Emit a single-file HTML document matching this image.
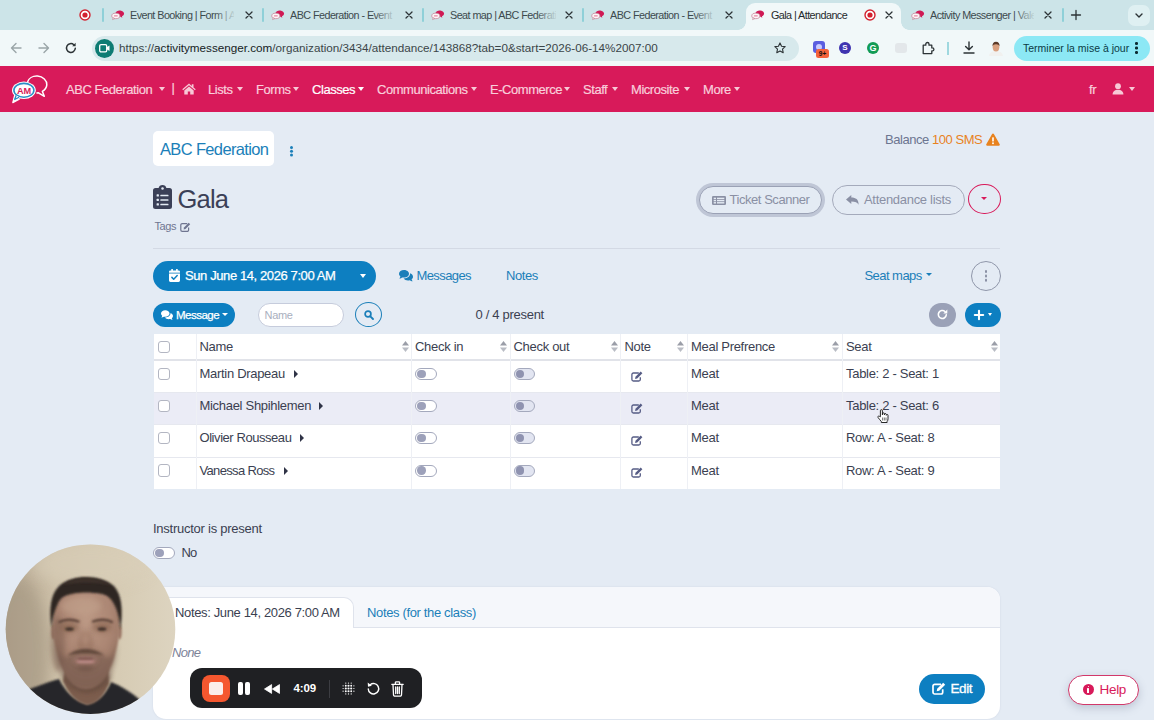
<!DOCTYPE html>
<html lang="en">
<head>
<meta charset="utf-8">
<title>Gala | Attendance</title>
<style>
*{box-sizing:border-box;margin:0;padding:0}
html,body{width:1154px;height:720px;overflow:hidden}
body{position:relative;background:#e4ebf4;font-family:"Liberation Sans",sans-serif;color:#3b3f51;font-size:13px;line-height:1}
.a{position:absolute;white-space:nowrap}
svg{position:absolute;overflow:visible}
/* ---------- browser chrome ---------- */
#tabs{left:0;top:0;width:1154px;height:30px;background:#cce4e8}
#tool{left:0;top:30px;width:1154px;height:36px;background:#f1f8f9}
.tt{top:9.500px;font-size:10.800px;letter-spacing:-.56px;color:#3c4a4e;height:13px;overflow:hidden}
.tsep{top:8px;width:1.5px;height:14px;background:#8fd0d8;border-radius:1px}
.tx{top:9px;font-size:12px;color:#2c3336}
#url{left:92px;top:35.500px;width:706.500px;height:25px;border-radius:12.500px;background:#d7e9ec}
/* ---------- app nav ---------- */
#nav{left:0;top:66px;width:1154px;height:46.300px;background:#d81a5a}
.nv{top:82.500px;font-size:13px;letter-spacing:-.45px;color:#f9cfdb;-webkit-text-stroke:.2px #f9cfdb}
.cv{width:0;height:0;border-left:3.5px solid transparent;border-right:3.5px solid transparent;border-top:4px solid #f7c9d6;top:87px}
/* ---------- page ---------- */
.blue{color:#1a7db8}
.pill{border-radius:20px}

.t{font-size:13px;letter-spacing:-.45px}
.bl{color:#1b7fb9}
.gr{color:#8a90a4}
.btn{border-radius:16px}

.th,.td{font-size:13px;letter-spacing:-.3px;color:#3b3f51}
.vb{width:1px;background:#eef0f5;top:333.500px;height:155.500px}
.hb{left:153.500px;width:846.500px;height:1px;background:#e6e8ef}
.cb{width:12.500px;height:12.500px;border:1px solid #b3b6c2;border-radius:3px;background:#fff;left:157.500px}
.tg{width:21.500px;height:12px;border-radius:6px;border:1px solid #a4a9bd;background:#fff}
.tg i{position:absolute;left:1.200px;top:.800px;width:8.400px;height:8.400px;border-radius:50%;background:#9da1ba}
.tg.d{background:#e2e5f1}
.tg.d i{background:#8f93b0}
</style>
</head>
<body>
<!-- ======= BROWSER CHROME ======= -->
<div class="a" id="tabs"></div>
<div class="a" id="tool"></div>
<svg width="0" height="0"><defs>
<g id="fav" transform="translate(0,1.300) scale(.86)"><path d="M5.200 4.300c.6-2 3-3.300 5.600-3 2.700.3 4.600 2 4.400 4-.1 1.300-1.100 2.300-2.500 2.900l.5 1.600-2.100-1.200c-.5 0-1 0-1.500-.1" fill="#cf1a55"/><ellipse cx="5.600" cy="7.700" rx="4.700" ry="3.200" fill="#fdf6f8" stroke="#c9879b" stroke-width=".9"/><path d="M2.600 9.800l-.8 2.200 2.700-1.200z" fill="#fdf6f8" stroke="#c9879b" stroke-width=".8"/><rect x="3.300" y="6.900" width="4.600" height="1.500" rx=".5" fill="#e58aa5"/></g>
<g id="rec"><circle cx="6" cy="6" r="5" fill="#fff" stroke="#d3212f" stroke-width="1.400"/><circle cx="6" cy="6" r="2.600" fill="#d3212f"/></g>
<g id="xx"><path d="M1 1l6 6M7 1l-6 6" stroke="#2c3336" stroke-width="1.300" stroke-linecap="round" fill="none"/></g>
</defs></svg>
<!-- active tab -->
<div class="a" style="left:746px;top:3px;width:155px;height:28px;background:#f1f8f9;border-radius:9px 9px 0 0"></div>
<div class="a" style="left:738px;top:22px;width:8px;height:8px;background:radial-gradient(circle at 0 0,#cce4e8 7.500px,#f1f8f9 8px)"></div>
<div class="a" style="left:901px;top:22px;width:8px;height:8px;background:radial-gradient(circle at 100% 0,#cce4e8 7.500px,#f1f8f9 8px)"></div>
<svg style="left:79px;top:9px" width="12" height="12"><use href="#rec"/></svg>
<div class="a tsep" style="left:102px"></div>
<svg style="left:111px;top:8px" width="16" height="13"><use href="#fav"/></svg>
<div class="a tt" style="left:130px;width:104px">Event Booking | Form | Ac</div>
<svg style="left:245px;top:11px" width="8" height="8"><use href="#xx"/></svg>
<div class="a tsep" style="left:262px"></div>
<svg style="left:271px;top:8px" width="16" height="13"><use href="#fav"/></svg>
<div class="a tt" style="left:290px;width:104px">ABC Federation - Event B</div>
<svg style="left:405px;top:11px" width="8" height="8"><use href="#xx"/></svg>
<div class="a tsep" style="left:422px"></div>
<svg style="left:431px;top:8px" width="16" height="13"><use href="#fav"/></svg>
<div class="a tt" style="left:450px;width:106px">Seat map | ABC Federation</div>
<svg style="left:565px;top:11px" width="8" height="8"><use href="#xx"/></svg>
<div class="a tsep" style="left:582px"></div>
<svg style="left:591px;top:8px" width="16" height="13"><use href="#fav"/></svg>
<div class="a tt" style="left:610px;width:104px">ABC Federation - Event B</div>
<svg style="left:725px;top:11px" width="8" height="8"><use href="#xx"/></svg>
<svg style="left:751px;top:8px" width="16" height="13"><use href="#fav"/></svg>
<div class="a tt" style="left:771px;width:90px;color:#1f2a2d">Gala | Attendance</div>
<svg style="left:864px;top:9px" width="12" height="12"><use href="#rec"/></svg>
<svg style="left:885px;top:11px" width="8" height="8"><use href="#xx"/></svg>
<svg style="left:911px;top:8px" width="16" height="13"><use href="#fav"/></svg>
<div class="a tt" style="left:930px;width:104px">Activity Messenger | Vale</div>
<svg style="left:1044px;top:11px" width="8" height="8"><use href="#xx"/></svg>
<div class="a tsep" style="left:1062px"></div>
<svg style="left:1071px;top:10px" width="10" height="10"><path d="M5 .5v9M.5 5h9" stroke="#2c3336" stroke-width="1.300" stroke-linecap="round"/></svg>
<div class="a" style="left:1128px;top:5px;width:22px;height:21px;border-radius:7px;background:#dff0f2"></div>
<svg style="left:1135px;top:13px" width="8" height="6"><path d="M1 1l3 3 3-3" stroke="#2c3336" stroke-width="1.400" fill="none" stroke-linecap="round" stroke-linejoin="round"/></svg>
<!-- fades on tab titles -->
<div class="a" style="left:214px;top:8px;width:22px;height:15px;background:linear-gradient(90deg,rgba(204,228,232,0),#cce4e8)"></div>
<div class="a" style="left:374px;top:8px;width:22px;height:15px;background:linear-gradient(90deg,rgba(204,228,232,0),#cce4e8)"></div>
<div class="a" style="left:536px;top:8px;width:22px;height:15px;background:linear-gradient(90deg,rgba(204,228,232,0),#cce4e8)"></div>
<div class="a" style="left:694px;top:8px;width:22px;height:15px;background:linear-gradient(90deg,rgba(204,228,232,0),#cce4e8)"></div>
<div class="a" style="left:1014px;top:8px;width:22px;height:15px;background:linear-gradient(90deg,rgba(204,228,232,0),#cce4e8)"></div>
<!-- toolbar -->
<svg style="left:10px;top:42px" width="12" height="12"><path d="M11 6H1.500M6 1.500L1.500 6 6 10.500" stroke="#9aa5a8" stroke-width="1.400" fill="none" stroke-linecap="round" stroke-linejoin="round"/></svg>
<svg style="left:38px;top:42px" width="12" height="12"><path d="M1 6h9.500M6 1.500L10.500 6 6 10.500" stroke="#9aa5a8" stroke-width="1.400" fill="none" stroke-linecap="round" stroke-linejoin="round"/></svg>
<svg style="left:65px;top:42px" width="12" height="12"><path d="M10.300 6.300a4.400 4.400 0 1 1-1.500-3.600" stroke="#2c3336" stroke-width="1.500" fill="none" stroke-linecap="round"/><path d="M10.600.8v3.400H7.200z" fill="#2c3336"/></svg>
<div class="a" id="url"></div>
<div class="a" style="left:95px;top:39px;width:19px;height:19px;border-radius:50%;background:#0e7c73"></div>
<svg style="left:99px;top:44px" width="11" height="9"><rect x=".7" y=".7" width="7" height="7.200" rx="1.300" fill="none" stroke="#fff" stroke-width="1.300"/><path d="M7.700 3.300l2.800-1.800v5.600L7.700 5.300z" fill="#fff"/></svg>
<div class="a" style="left:119px;top:42px;font-size:11.7px;color:#3b4548" id="urltxt">https://<span style="color:#161c1e">activitymessenger.com</span>/organization/3434/attendance/143868?tab=0&amp;start=2026-06-14%2007:00</div>
<svg style="left:774px;top:42px" width="12" height="12"><path d="M6 .9l1.550 3.300 3.600.45-2.650 2.500.7 3.550L6 8.950 2.800 10.700l.7-3.550L.85 4.650l3.600-.45z" fill="none" stroke="#2c3336" stroke-width="1.100" stroke-linejoin="round"/></svg>
<!-- extensions -->
<div class="a" style="left:813px;top:41px;width:12px;height:12px;border-radius:3px;background:#5b5fe0"></div>
<div class="a" style="left:816px;top:44px;width:6px;height:6px;border-radius:50%;background:#c9cbff"></div>
<div class="a" style="left:816px;top:49px;width:13px;height:9px;border-radius:2.500px;background:#f4623a;color:#111;font-size:6.500px;font-weight:700;line-height:9px;text-align:center">9+</div>
<div class="a" style="left:839px;top:42px;width:12px;height:12px;border-radius:50%;background:#3f33b0;color:#fff;font-size:8px;font-weight:700;line-height:12px;text-align:center">S</div>
<div class="a" style="left:867px;top:42px;width:12px;height:12px;border-radius:50%;background:#129b55;color:#fff;font-size:9px;font-weight:700;line-height:12px;text-align:center">G</div>
<div class="a" style="left:895px;top:43px;width:12px;height:10px;border-radius:3px;background:#e3e7ea"></div>
<svg style="left:921px;top:41px" width="14" height="14"><path d="M2.200 4.200h2.600V3.100a1.600 1.600 0 0 1 3.200 0v1.100h2.800v2.700h.6a1.500 1.500 0 0 1 0 3h-.6v2.700H2.200z" fill="none" stroke="#2c3336" stroke-width="1.300" stroke-linejoin="round"/></svg>
<div class="a" style="left:947px;top:42px;width:1.500px;height:13px;background:#9fd8df"></div>
<svg style="left:963px;top:41px" width="12" height="13"><path d="M6 1v7.500M2.600 5.400L6 8.800l3.400-3.400M1 12h10" stroke="#2c3336" stroke-width="1.400" fill="none" stroke-linecap="round" stroke-linejoin="round"/></svg>
<svg style="left:989px;top:41px" width="14" height="15" viewBox="0 0 14 15"><path d="M0 15c.5-3.500 3-5 7-5s6.500 1.500 7 5z" fill="#f1f1ef"/><ellipse cx="7" cy="6.300" rx="3.300" ry="4.200" fill="#d9a07f"/><path d="M3.500 5.500c-.3-3 1.200-4.800 3.500-4.800s3.900 1.800 3.500 4.800c-.5-1.500-1.300-2.300-3.500-2.300S4 4 3.500 5.500z" fill="#5b3a28"/></svg>
<div class="a" style="left:1014px;top:36px;width:136px;height:25px;border-radius:13px;background:#8ce8f5"></div>
<div class="a" style="left:1023px;top:43px;font-size:10.500px;color:#0a3a44" id="upd">Terminer la mise à jour</div>
<div class="a" style="left:1135px;top:42px;width:2.600px;height:2.600px;border-radius:50%;background:#0b2a30;box-shadow:0 4.500px 0 #0b2a30,0 9px 0 #0b2a30"></div>
<!--CHROME-->
<!-- ======= APP NAV ======= -->
<div class="a" id="nav"></div>
<svg style="left:11px;top:74px" width="38" height="32" viewBox="0 0 38 32"><path d="M16.500 8c1.200-3.700 5.200-6.200 10-5.900 5.500.4 9.600 4.300 9.300 8.800-.2 2.700-1.900 5-4.500 6.400l2 5-5.800-3.500c-.7.100-1.400.100-2.100.100" fill="none" stroke="#fff" stroke-width="1.500" stroke-linejoin="round"/><path d="M3.600 21.500L1.800 28.600l6.500-3.400z" fill="#fff" stroke="#fff" stroke-width="1.200" stroke-linejoin="round"/><ellipse cx="12.900" cy="16.300" rx="11.900" ry="8.700" fill="#fff"/><ellipse cx="12.900" cy="16.300" rx="10" ry="6.900" fill="#fff" stroke="#2a8fc6" stroke-width="1.600"/><path d="M5.200 21.300l-1.500 4.200 4.300-2.300" fill="#fff" stroke="#2a8fc6" stroke-width="1.300" stroke-linejoin="round"/><text x="12.900" y="20" text-anchor="middle" font-family="Liberation Sans,sans-serif" font-size="9.200" font-weight="700" fill="#d81a5a" letter-spacing="-.3">AM</text></svg>
<div class="a nv" style="left:66px">ABC Federation</div><div class="a cv" style="left:158.500px"></div>
<div class="a nv" style="left:171.500px;top:81px">|</div>
<svg style="left:182px;top:83px" width="14" height="12" viewBox="0 0 14 12"><path d="M7 .6L.3 6.300l.8.900L7 2.200l5.900 5 .8-.9L11.500 4.400V1.200H9.800v1.700z" fill="#f7c9d6"/><path d="M7 3.400L2.300 7.400v4.100h3.500V8.600h2.400v2.900h3.500V7.400z" fill="#f7c9d6"/></svg>
<div class="a nv" style="left:208px">Lists</div><div class="a cv" style="left:236.500px"></div>
<div class="a nv" style="left:256px">Forms</div><div class="a cv" style="left:292.500px"></div>
<div class="a nv" style="left:312px;color:#fff;-webkit-text-stroke:.2px #fff">Classes</div><div class="a cv" style="left:357.500px;border-top-color:#fff"></div>
<div class="a nv" style="left:377px">Communications</div><div class="a cv" style="left:470.500px"></div>
<div class="a nv" style="left:490px">E-Commerce</div><div class="a cv" style="left:563.500px"></div>
<div class="a nv" style="left:583px">Staff</div><div class="a cv" style="left:611.500px"></div>
<div class="a nv" style="left:631px">Microsite</div><div class="a cv" style="left:683.500px"></div>
<div class="a nv" style="left:703px">More</div><div class="a cv" style="left:733.500px"></div>
<div class="a nv" style="left:1089px">fr</div>
<svg style="left:1112px;top:83px" width="12" height="12" viewBox="0 0 12 12"><circle cx="6" cy="3.200" r="2.900" fill="#f7c9d6"/><path d="M.6 11.600c0-3.200 2.200-4.800 5.400-4.800s5.400 1.600 5.400 4.800z" fill="#f7c9d6"/></svg>
<div class="a cv" style="left:1128.500px"></div>
<!--NAV-->
<!-- ======= PAGE ======= -->
<div class="a" style="left:153px;top:130.500px;width:121px;height:35.500px;background:#fff;border-radius:5px"></div>
<div class="a bl" id="org" style="left:160px;top:141px;font-size:16.500px;letter-spacing:-.65px">ABC Federation</div>
<div class="a" style="left:289.500px;top:145.500px;width:3.200px;height:3.200px;border-radius:50%;background:#1b7fb9;box-shadow:0 3.700px 0 #1b7fb9,0 7.400px 0 #1b7fb9"></div>
<div class="a t" id="bal" style="left:885px;top:133px;color:#6c7590">Balance <span style="color:#e8821e">100 SMS</span></div>
<svg style="left:986px;top:133px" width="14" height="13" viewBox="0 0 14 13"><path d="M7 .5a1 1 0 0 1 .9.500l5.800 10.300a1 1 0 0 1-.9 1.500H1.200a1 1 0 0 1-.9-1.500L6.100 1A1 1 0 0 1 7 .5z" fill="#e8821e"/><rect x="6.200" y="4.200" width="1.600" height="4.300" rx=".6" fill="#fff"/><circle cx="7" cy="10.300" r=".95" fill="#fff"/></svg>
<!-- heading -->
<svg style="left:153px;top:185px" width="19" height="24" viewBox="0 0 19 24"><path d="M2.500 3h3.100a4 4 0 0 1 7.800 0h3.100A2.500 2.500 0 0 1 19 5.500v16a2.500 2.500 0 0 1-2.500 2.500h-14A2.500 2.500 0 0 1 0 21.500v-16A2.500 2.500 0 0 1 2.500 3z" fill="#3b4057"/><circle cx="9.500" cy="3.600" r="1.250" fill="#e4ebf4"/><g fill="#e4ebf4"><rect x="3.600" y="9.300" width="2.300" height="2.300" rx=".5"/><rect x="7.300" y="9.700" width="8.200" height="1.600" rx=".5"/><rect x="3.600" y="13.800" width="2.300" height="2.300" rx=".5"/><rect x="7.300" y="14.200" width="8.200" height="1.600" rx=".5"/><rect x="3.600" y="18.300" width="2.300" height="2.300" rx=".5"/><rect x="7.300" y="18.700" width="8.200" height="1.600" rx=".5"/></g></svg>
<div class="a" id="gala" style="left:177.500px;top:186.500px;font-size:25.500px;letter-spacing:-.8px;color:#3b4057">Gala</div>
<div class="a" id="tags" style="left:154.500px;top:221px;font-size:11px;letter-spacing:-.4px;color:#6f7590">Tags</div>
<svg style="left:180px;top:222px" width="11" height="10" viewBox="0 0 11 10"><path d="M7.200 1.600H2.200A1.400 1.400 0 0 0 .8 3v5a1.400 1.400 0 0 0 1.400 1.400h5A1.400 1.400 0 0 0 8.600 8V5.600" fill="none" stroke="#6f7590" stroke-width="1.200"/><path d="M4 5.500L8.700.8l1.500 1.500L5.500 7 3.600 7.400z" fill="#6f7590"/></svg>
<!-- top-right buttons -->
<div class="a" style="left:695.500px;top:182.500px;width:129px;height:34px;border-radius:17px;background:#bfc6d6"></div>
<div class="a" style="left:698.500px;top:185.500px;width:123px;height:28px;border-radius:14px;background:#e4ebf4;border:1px solid #9aa1b5"></div>
<svg style="left:711.500px;top:195.500px" width="14" height="9" viewBox="0 0 14 9"><rect width="14" height="9" rx="1.300" fill="#8a90a4"/><g fill="#e4ebf4"><rect x="1.700" y="1.700" width="2.300" height="1.400"/><rect x="5" y="1.700" width="7.300" height="1.400"/><rect x="1.700" y="3.900" width="2.300" height="1.400"/><rect x="5" y="3.900" width="7.300" height="1.400"/><rect x="1.700" y="6.100" width="2.300" height="1.400"/><rect x="5" y="6.100" width="7.300" height="1.400"/></g></svg>
<div class="a t gr" id="tsc" style="left:729.500px;top:192.500px">Ticket Scanner</div>
<div class="a" style="left:831.500px;top:184.500px;width:133px;height:30px;border-radius:15px;border:1px solid #a4aabb"></div>
<svg style="left:846px;top:195px" width="13" height="10" viewBox="0 0 13 10"><path d="M5.300 0v2.600c4.500 0 7.300 1.900 7.300 7.100-1.200-2.500-3.200-3.300-7.300-3.300V9L0 4.500z" fill="#8a90a4"/></svg>
<div class="a t gr" id="atl" style="left:864px;top:192.500px;letter-spacing:-.3px">Attendance lists</div>
<div class="a" style="left:968px;top:183.600px;width:32.500px;height:30.400px;border-radius:50%;border:1px solid #d81a5a"></div>
<div class="a" style="left:980.500px;top:196.500px;width:0;height:0;border-left:3.500px solid transparent;border-right:3.500px solid transparent;border-top:3.800px solid #d81a5a"></div>
<div class="a" style="left:153px;top:247.500px;width:847px;height:1px;background:#d3d9e4"></div>
<!-- date row -->
<div class="a" style="left:153px;top:260.500px;width:223px;height:30px;border-radius:15px;background:#0d7fc1"></div>
<svg style="left:169px;top:268.500px" width="11" height="13" viewBox="0 0 11 13"><path d="M2.300 0h1.600v1.400h3.200V0h1.600v1.400h.9A1.400 1.400 0 0 1 11 2.800v8.800A1.400 1.400 0 0 1 9.600 13H1.400A1.400 1.400 0 0 1 0 11.600V2.800a1.400 1.400 0 0 1 1.400-1.400h.9z" fill="#fff"/><path d="M2.900 8.400l1.800 1.800 3.500-3.600" stroke="#0d7fc1" stroke-width="1.500" fill="none" stroke-linecap="round" stroke-linejoin="round"/><rect x="0" y="3.700" width="11" height=".8" fill="#0d7fc1"/></svg>
<div class="a" id="dt" style="left:185px;top:269px;font-size:13px;letter-spacing:-.4px;color:#fff;-webkit-text-stroke:.25px #fff">Sun June 14, 2026 7:00 AM</div>
<div class="a" style="left:359.500px;top:274px;width:0;height:0;border-left:3.500px solid transparent;border-right:3.500px solid transparent;border-top:4px solid #fff"></div>
<svg style="left:399px;top:269.500px" width="14" height="11" viewBox="0 0 14 11"><path d="M5 0c2.800 0 5 1.700 5 3.800S7.800 7.600 5 7.600c-.6 0-1.200-.1-1.700-.2C2.600 7.900 1.600 8.400.3 8.400c.6-.6 1-1.300 1.100-2C.5 5.700 0 4.800 0 3.800 0 1.700 2.200 0 5 0z" fill="#1b7fb9"/><path d="M11 4c1.700.6 3 1.900 3 3.400 0 1-.5 1.900-1.400 2.600.1.700.5 1.400 1.100 2-1.300 0-2.300-.5-3-1-.5.100-1.100.2-1.700.2-1.900 0-3.500-.8-4.400-2 .1 0 .3 0 .4 0 3.400 0 6.100-2.200 6.100-4.900 0-.1 0-.2-.1-.3z" fill="#1b7fb9" transform="translate(0,-.7)"/></svg>
<div class="a t bl" id="msgs" style="left:416.500px;top:269px;font-size:13px;letter-spacing:-.6px">Messages</div>
<div class="a t bl" id="nts" style="left:506px;top:269px;font-size:13px">Notes</div>
<div class="a t bl" id="smp" style="left:864.500px;top:268.500px;font-size:13px;letter-spacing:-.55px">Seat maps</div>
<div class="a" style="left:926px;top:272.500px;width:0;height:0;border-left:3.300px solid transparent;border-right:3.300px solid transparent;border-top:3.800px solid #1b7fb9"></div>
<div class="a" style="left:971px;top:260.500px;width:30px;height:30px;border-radius:50%;border:1px solid #9097aa"></div>
<div class="a" style="left:984.600px;top:269.800px;width:2.800px;height:2.800px;border-radius:50%;background:#8a90a4;box-shadow:0 4.400px 0 #8a90a4,0 8.800px 0 #8a90a4"></div>
<!-- message row -->
<div class="a" style="left:153px;top:303px;width:82px;height:23.500px;border-radius:12px;background:#0d7fc1"></div>
<svg style="left:161px;top:310px" width="12" height="10" viewBox="0 0 14 11"><path d="M5 0c2.800 0 5 1.700 5 3.800S7.800 7.600 5 7.600c-.6 0-1.200-.1-1.700-.2C2.600 7.900 1.600 8.400.3 8.400c.6-.6 1-1.300 1.100-2C.5 5.700 0 4.800 0 3.800 0 1.700 2.200 0 5 0z" fill="#fff"/><path d="M11 3.300c1.700.6 3 1.900 3 3.400 0 1-.5 1.900-1.400 2.600.1.700.5 1.400 1.100 2-1.300 0-2.300-.5-3-1-.5.100-1.100.2-1.700.2-1.900 0-3.500-.8-4.400-2h.4c3.400 0 6.100-2.200 6.100-4.900z" fill="#fff"/></svg>
<div class="a" id="msgb" style="left:176px;top:309.500px;font-size:11.500px;letter-spacing:-.5px;color:#fff;-webkit-text-stroke:.25px #fff">Message</div>
<div class="a" style="left:221.500px;top:313px;width:0;height:0;border-left:3.200px solid transparent;border-right:3.200px solid transparent;border-top:3.600px solid #fff"></div>
<div class="a" style="left:257.500px;top:303px;width:86px;height:23.500px;border-radius:12px;background:#fff;border:1px solid #c6ccdc"></div>
<div class="a" id="nmph" style="left:264.500px;top:309.500px;font-size:11px;letter-spacing:-.3px;color:#a9afbe">Name</div>
<div class="a" style="left:354.500px;top:301.700px;width:27.700px;height:25.400px;border-radius:50%;border:1px solid #1b7fb9"></div>
<svg style="left:363.500px;top:309.500px" width="10" height="10" viewBox="0 0 10 10"><circle cx="4" cy="4" r="2.900" fill="none" stroke="#1b7fb9" stroke-width="1.700"/><path d="M6.300 6.300L9 9" stroke="#1b7fb9" stroke-width="1.900" stroke-linecap="round"/></svg>
<div class="a t" id="pres" style="left:475.500px;top:308px;letter-spacing:-.3px">0 / 4 present</div>
<div class="a" style="left:928.500px;top:302.500px;width:27px;height:24px;border-radius:12px;background:#9aa1b7"></div>
<svg style="left:936.500px;top:309px" width="11" height="11" viewBox="0 0 11 11"><path d="M9.300 5.800a4 4 0 1 1-1.300-3.300" stroke="#fff" stroke-width="1.600" fill="none" stroke-linecap="round"/><path d="M10.300.5v4H6.300z" fill="#fff"/></svg>
<div class="a" style="left:964.500px;top:302.500px;width:36px;height:24px;border-radius:12px;background:#0d7fc1"></div>
<svg style="left:973.500px;top:309.500px" width="10" height="10" viewBox="0 0 10 10"><path d="M5 .8v8.400M.8 5h8.400" stroke="#fff" stroke-width="2.100" stroke-linecap="round"/></svg>
<div class="a" style="left:987.700px;top:313px;width:0;height:0;border-left:2.900px solid transparent;border-right:2.900px solid transparent;border-top:3.300px solid #fff"></div>
<!--PAGE-->
<div class="a" style="left:153.500px;top:333.500px;width:846.500px;height:155.500px;background:#fff"></div>
<div class="a" style="left:153.500px;top:392px;width:846.500px;height:32.500px;background:#ebecf6"></div>
<div class="a" style="left:153.500px;top:359px;width:846.500px;height:2px;background:#e1e3e9"></div>
<div class="a hb" style="top:392px"></div>
<div class="a hb" style="top:424px"></div>
<div class="a hb" style="top:456.5px"></div>
<div class="a vb" style="left:195.5px"></div>
<div class="a vb" style="left:411px"></div>
<div class="a vb" style="left:509.5px"></div>
<div class="a vb" style="left:620px"></div>
<div class="a vb" style="left:686.5px"></div>
<div class="a vb" style="left:841.5px"></div>
<div class="a cb" style="top:340.700px"></div>
<div class="a th" id="h1" style="left:199.5px;top:339.800px">Name</div>
<div class="a th" id="h2" style="left:415px;top:339.800px">Check in</div>
<div class="a th" id="h3" style="left:513.5px;top:339.800px">Check out</div>
<div class="a th" id="h4" style="left:624.5px;top:339.800px">Note</div>
<div class="a th" id="h5" style="left:691px;top:339.800px">Meal Prefrence</div>
<div class="a th" id="h6" style="left:846px;top:339.800px">Seat</div>
<svg style="left:401.8px;top:341px" width="7" height="11" viewBox="0 0 7 11"><path d="M3.500 0L7 4.500H0z" fill="#9b9ea8"/><path d="M3.500 11L7 6.500H0z" fill="#b9bcc4"/></svg>
<svg style="left:499.5px;top:341px" width="7" height="11" viewBox="0 0 7 11"><path d="M3.500 0L7 4.500H0z" fill="#9b9ea8"/><path d="M3.500 11L7 6.500H0z" fill="#b9bcc4"/></svg>
<svg style="left:610.5px;top:341px" width="7" height="11" viewBox="0 0 7 11"><path d="M3.500 0L7 4.500H0z" fill="#9b9ea8"/><path d="M3.500 11L7 6.500H0z" fill="#b9bcc4"/></svg>
<svg style="left:677.3px;top:341px" width="7" height="11" viewBox="0 0 7 11"><path d="M3.500 0L7 4.500H0z" fill="#9b9ea8"/><path d="M3.500 11L7 6.500H0z" fill="#b9bcc4"/></svg>
<svg style="left:832.3px;top:341px" width="7" height="11" viewBox="0 0 7 11"><path d="M3.500 0L7 4.500H0z" fill="#9b9ea8"/><path d="M3.500 11L7 6.500H0z" fill="#b9bcc4"/></svg>
<svg style="left:990.6px;top:341px" width="7" height="11" viewBox="0 0 7 11"><path d="M3.500 0L7 4.500H0z" fill="#9b9ea8"/><path d="M3.500 11L7 6.500H0z" fill="#b9bcc4"/></svg>
<div class="a cb" style="top:367.5px"></div>
<div class="a td" id="n0" style="left:199.500px;top:367px">Martin Drapeau</div>
<div class="a" style="left:294px;top:370px;width:0;height:0;border-top:4.100px solid transparent;border-bottom:4.100px solid transparent;border-left:4.500px solid #2f3346"></div>
<div class="a tg" style="left:415px;top:368px"><i></i></div>
<div class="a tg d" style="left:513.500px;top:368px"><i></i></div>
<svg style="left:631px;top:370.5px" width="13" height="11" viewBox="0 0 13 11"><path d="M7.800 2H2.400A1.500 1.500 0 0 0 .9 3.500v5A1.500 1.500 0 0 0 2.400 10h5.400a1.500 1.500 0 0 0 1.500-1.500V6.200" fill="none" stroke="#565c85" stroke-width="1.300"/><path d="M4.500 5.800L9.700.6l1.700 1.700-5.200 5.200-2.100.4z" fill="#565c85"/></svg>
<div class="a td" id="m0" style="left:691px;top:367px">Meat</div>
<div class="a td" id="s0" style="left:846px;top:367px">Table: 2 - Seat: 1</div>
<div class="a cb" style="top:399.5px"></div>
<div class="a td" id="n1" style="left:199.500px;top:399px">Michael Shpihlemen</div>
<div class="a" style="left:319px;top:402px;width:0;height:0;border-top:4.100px solid transparent;border-bottom:4.100px solid transparent;border-left:4.500px solid #2f3346"></div>
<div class="a tg" style="left:415px;top:400px"><i></i></div>
<div class="a tg d" style="left:513.500px;top:400px"><i></i></div>
<svg style="left:631px;top:402.5px" width="13" height="11" viewBox="0 0 13 11"><path d="M7.800 2H2.400A1.500 1.500 0 0 0 .9 3.500v5A1.500 1.500 0 0 0 2.400 10h5.400a1.500 1.500 0 0 0 1.500-1.500V6.200" fill="none" stroke="#565c85" stroke-width="1.300"/><path d="M4.500 5.800L9.700.6l1.700 1.700-5.200 5.200-2.100.4z" fill="#565c85"/></svg>
<div class="a td" id="m1" style="left:691px;top:399px">Meat</div>
<div class="a td" id="s1" style="left:846px;top:399px">Table: 2 - Seat: 6</div>
<div class="a cb" style="top:431.5px"></div>
<div class="a td" id="n2" style="letter-spacing:-.44px;left:199.500px;top:431px">Olivier Rousseau</div>
<div class="a" style="left:300px;top:434px;width:0;height:0;border-top:4.100px solid transparent;border-bottom:4.100px solid transparent;border-left:4.500px solid #2f3346"></div>
<div class="a tg" style="left:415px;top:432px"><i></i></div>
<div class="a tg d" style="left:513.500px;top:432px"><i></i></div>
<svg style="left:631px;top:434.5px" width="13" height="11" viewBox="0 0 13 11"><path d="M7.800 2H2.400A1.500 1.500 0 0 0 .9 3.500v5A1.500 1.500 0 0 0 2.400 10h5.400a1.500 1.500 0 0 0 1.500-1.500V6.200" fill="none" stroke="#565c85" stroke-width="1.300"/><path d="M4.500 5.800L9.700.6l1.700 1.700-5.200 5.200-2.100.4z" fill="#565c85"/></svg>
<div class="a td" id="m2" style="left:691px;top:431px">Meat</div>
<div class="a td" id="s2" style="left:846px;top:431px">Row: A - Seat: 8</div>
<div class="a cb" style="top:464.0px"></div>
<div class="a td" id="n3" style="letter-spacing:-.66px;left:199.500px;top:463.5px">Vanessa Ross</div>
<div class="a" style="left:283.5px;top:466.5px;width:0;height:0;border-top:4.100px solid transparent;border-bottom:4.100px solid transparent;border-left:4.500px solid #2f3346"></div>
<div class="a tg" style="left:415px;top:464.5px"><i></i></div>
<div class="a tg d" style="left:513.500px;top:464.5px"><i></i></div>
<svg style="left:631px;top:467.0px" width="13" height="11" viewBox="0 0 13 11"><path d="M7.800 2H2.400A1.500 1.500 0 0 0 .9 3.500v5A1.500 1.500 0 0 0 2.400 10h5.400a1.500 1.500 0 0 0 1.500-1.500V6.200" fill="none" stroke="#565c85" stroke-width="1.300"/><path d="M4.500 5.800L9.700.6l1.700 1.700-5.200 5.200-2.100.4z" fill="#565c85"/></svg>
<div class="a td" id="m3" style="left:691px;top:463.5px">Meat</div>
<div class="a td" id="s3" style="left:846px;top:463.5px">Row: A - Seat: 9</div>
<!--TABLE-->
<div class="a t" id="inst" style="left:153px;top:522px;letter-spacing:-.25px">Instructor is present</div>
<div class="a tg" style="left:153px;top:546.500px;width:22px;height:12.500px;border-radius:6.500px"><i style="top:1.050px;left:1.300px"></i></div>
<div class="a t" id="no" style="left:181.500px;top:545.500px;letter-spacing:-.9px">No</div>
<!-- notes card -->
<div class="a" style="left:153px;top:586.500px;width:847px;height:132px;border-radius:13px;background:#fff;box-shadow:0 0 2px rgba(120,130,160,.18)"></div>
<div class="a" style="left:153px;top:586.500px;width:847px;height:41px;border-radius:13px 13px 0 0;background:#f5f7fb"></div>
<div class="a" style="left:153px;top:627px;width:847px;height:1px;background:#dfe3ec"></div>
<div class="a" style="left:153px;top:596.500px;width:201px;height:31.500px;border-radius:10px 10px 0 0;background:#fff;border:1px solid #dfe3ec;border-bottom:0"></div>
<div class="a t" id="ntab" style="left:175px;top:605.500px;letter-spacing:-.36px">Notes: June 14, 2026 7:00 AM</div>
<div class="a t bl" id="ntab2" style="left:367px;top:605.500px;letter-spacing:-.35px">Notes (for the class)</div>
<div class="a t" id="none" style="left:172px;top:646px;font-style:italic;color:#7d8398;letter-spacing:-.7px">None</div>
<div class="a" style="left:918.500px;top:674px;width:66px;height:29.500px;border-radius:15px;background:#0d7fc1"></div>
<svg style="left:932px;top:682px" width="15" height="13" viewBox="0 0 15 13"><path d="M9 2.300H2.700A1.700 1.700 0 0 0 1 4v6.300A1.700 1.700 0 0 0 2.700 12H9a1.700 1.700 0 0 0 1.700-1.700V7.200" fill="none" stroke="#fff" stroke-width="1.700"/><path d="M5.200 6.800l6-6 2 2-6 6-2.500.5z" fill="#fff"/></svg>
<div class="a" id="edit" style="left:950.500px;top:682px;font-size:13.500px;letter-spacing:-.4px;color:#fff;-webkit-text-stroke:.3px #fff">Edit</div>
<div class="a" style="left:1068px;top:675px;width:71px;height:30px;border-radius:15px;background:#fff;border:1px solid #d2386a;box-shadow:0 3px 8px rgba(90,100,130,.28)"></div>
<div class="a" style="left:1082.500px;top:683.500px;width:11.700px;height:11.700px;border-radius:50%;background:#d81a5a"></div>
<div class="a" style="left:1087.500px;top:685.500px;width:1.800px;height:1.800px;border-radius:50%;background:#fff"></div>
<div class="a" style="left:1087.400px;top:688.300px;width:2px;height:4.600px;background:#fff;border-radius:.5px"></div>
<div class="a" id="help" style="left:1099.500px;top:683px;font-size:13.500px;letter-spacing:-.3px;color:#d81a5a">Help</div>
<!--BOTTOM-->
<!-- video bubble -->
<svg style="left:5px;top:544px" width="171" height="171" viewBox="0 0 171 171">
<defs>
<clipPath id="cc"><circle cx="85.500" cy="85.200" r="84.800"/></clipPath>
<linearGradient id="wall" x1="0" x2="1" y1="0" y2="0"><stop offset="0" stop-color="#b5a792"/><stop offset=".3" stop-color="#cec1a9"/><stop offset=".7" stop-color="#d7ccb5"/><stop offset="1" stop-color="#ddd4c0"/></linearGradient>
<radialGradient id="skin" cx=".5" cy=".36" r=".68"><stop offset="0" stop-color="#bc9985"/><stop offset=".55" stop-color="#ab8673"/><stop offset="1" stop-color="#8e6c5c"/></radialGradient>
<filter id="b1" filterUnits="userSpaceOnUse" x="-20" y="-20" width="211" height="211"><feGaussianBlur stdDeviation="1.200"/></filter>
<filter id="b2" filterUnits="userSpaceOnUse" x="-20" y="-20" width="211" height="211"><feGaussianBlur stdDeviation="2.800"/></filter>
<filter id="b3" filterUnits="userSpaceOnUse" x="-40" y="-40" width="251" height="251"><feGaussianBlur stdDeviation="7"/></filter>
</defs>
<g clip-path="url(#cc)">
<rect width="171" height="171" fill="url(#wall)"/>
<ellipse cx="14" cy="110" rx="30" ry="75" fill="#a39580" opacity=".6" filter="url(#b3)"/>
<ellipse cx="86" cy="20" rx="60" ry="22" fill="#d9cfb9" opacity=".6" filter="url(#b3)"/>
<!-- shirt -->
<path d="M14 150c10-5 26-11 40-15 6 12 16 22 28 25 11-3 19-10 24-22 10 4 20 10 28 17l10 26H6z" fill="#27262a" filter="url(#b1)"/>
<!-- neck -->
<path d="M61 124h42l1 16c-5 12-12 20-22 21-12-3-19-12-24-24z" fill="#7c5d4e" filter="url(#b1)"/>
<path d="M58 128c8 10 16 14 24 14s17-5 24-14l-1 8c-7 8-15 12-23 12s-16-4-23-12z" fill="#5f463b" opacity=".7" filter="url(#b2)"/>
<!-- ears -->
<ellipse cx="48.500" cy="88" rx="2.200" ry="7.500" fill="#93705e" filter="url(#b1)"/>
<ellipse cx="114.500" cy="88" rx="2.200" ry="7.500" fill="#9a7563" filter="url(#b1)"/>
<!-- head -->
<path d="M47.500 72c0-24 13.500-37 33.500-37s34 13 34 37c0 14-1 26-5 39-4 15-13.500 34-29 34S56.500 126 52.500 111c-4-13-5-25-5-39z" fill="url(#skin)" filter="url(#b1)"/>
<!-- forehead highlight -->
<ellipse cx="76" cy="62" rx="20" ry="9" fill="#c3a28d" opacity=".55" filter="url(#b2)"/>
<!-- left side shading -->
<ellipse cx="53" cy="100" rx="7" ry="28" fill="#7d5f51" opacity=".5" filter="url(#b2)"/>
<!-- stubble -->
<path d="M51 98c2 9 5 15 10 16 6-7 13-9 20-9s15 2 21 9c5-1 8-7 10-16-.5 14-3 27-9 36-6 8-13 11-22 11s-16-3-22-11c-6-9-8.500-22-8-36z" fill="#6f5548" opacity=".55" filter="url(#b2)"/>
<!-- hair -->
<path d="M46.500 84c-2.500-18-1.500-33 7.500-42 8-7 18-9 27-9 11 0 21 3 28 9 8 9 9 24 6.500 44-1-10-2.500-19-6.500-26-3-6-7-9-12-10-6-1-11-1.500-17-1.500-7 0-13 1-19 3-4 1.500-7 4.500-9 10-3 7-4.500 13-5.500 22.500z" fill="#2e2623" filter="url(#b1)"/>
<path d="M58 41c7-5 15-6.500 23-6.500 9 0 18 2 25 7-8-2-16-3-25-3-8 0-16 1-23 2.500z" fill="#43362f" opacity=".8" filter="url(#b1)"/>
<!-- eye sockets -->
<ellipse cx="64" cy="83" rx="10" ry="5.500" fill="#86634f" opacity=".65" filter="url(#b2)"/>
<ellipse cx="97" cy="83" rx="10" ry="5.500" fill="#86634f" opacity=".65" filter="url(#b2)"/>
<path d="M54.500 78c5-3 13-3 19-.5M88 77.500c6-2.500 14-2.500 19 .5" stroke="#5b4338" stroke-width="2.400" fill="none" stroke-linecap="round" filter="url(#b1)"/>
<ellipse cx="64.500" cy="85" rx="4.400" ry="1.800" fill="#40302a" filter="url(#b1)"/>
<ellipse cx="97" cy="85" rx="4.400" ry="1.800" fill="#40302a" filter="url(#b1)"/>
<!-- nose -->
<path d="M76 88c-1 8-4 12-3 15 3 2 12 2 15 0 1-3-2-7-3-15" fill="#8a6553" opacity=".55" filter="url(#b2)"/>
<ellipse cx="80.500" cy="95" rx="4" ry="7" fill="#bb9783" opacity=".6" filter="url(#b2)"/>
<!-- moustache + mouth -->
<path d="M63 111.500c5-5 12-6.500 17.500-6.500s13 1.500 18 6.500c-5-1.500-12-2-18-2s-12.500.5-17.500 2z" fill="#5e463b" opacity=".9" filter="url(#b1)"/>
<ellipse cx="80.500" cy="116.600" rx="11.500" ry="3.600" fill="#ad7f77" opacity=".9" filter="url(#b2)"/><ellipse cx="80.500" cy="117.600" rx="9" ry="2" fill="#b98a84" filter="url(#b1)"/>
<ellipse cx="80.500" cy="114.600" rx="8.500" ry="1.200" fill="#6f4b45" opacity=".85" filter="url(#b1)"/>
<ellipse cx="80.500" cy="124" rx="9" ry="3" fill="#64493e" opacity=".5" filter="url(#b2)"/>
</g>
</svg>
<!-- recorder control bar -->
<div class="a" style="left:189.500px;top:668px;width:232px;height:39.500px;border-radius:12px;background:#1f2023"></div>
<div class="a" style="left:202px;top:674.500px;width:27.500px;height:27px;border-radius:8px;background:#f5572f"></div>
<div class="a" style="left:208.500px;top:681.500px;width:14.300px;height:13.500px;border-radius:2.500px;background:#fbeeea"></div>
<div class="a" style="left:238.300px;top:681.700px;width:4.700px;height:13.300px;border-radius:1.900px;background:#fff"></div>
<div class="a" style="left:245.400px;top:681.700px;width:4.700px;height:13.300px;border-radius:1.900px;background:#fff"></div>
<svg style="left:264px;top:683.500px" width="16" height="10" viewBox="0 0 16 10"><path d="M7.600.6v8.800L.5 5zM15.500.6v8.800L8.400 5z" fill="#fff" stroke="#fff" stroke-width=".8" stroke-linejoin="round"/></svg>
<div class="a" id="tm" style="left:293.500px;top:682.500px;font-size:11.500px;font-weight:700;color:#fff;letter-spacing:-.1px">4:09</div>
<div class="a" style="left:329.200px;top:679.500px;width:1.200px;height:18px;background:#3c3d42"></div>
<svg style="left:342px;top:681.500px" width="13" height="13" viewBox="0 0 13 13" fill="#fff"><circle cx="1.1" cy="3.8" r="0.62"/><circle cx="1.1" cy="6.5" r="0.62"/><circle cx="1.1" cy="9.2" r="0.62"/><circle cx="3.8" cy="1.1" r="0.62"/><circle cx="3.8" cy="3.8" r="0.95"/><circle cx="3.8" cy="6.5" r="1.05"/><circle cx="3.8" cy="9.2" r="0.95"/><circle cx="3.8" cy="11.9" r="0.62"/><circle cx="6.5" cy="1.1" r="0.62"/><circle cx="6.5" cy="3.8" r="1.05"/><circle cx="6.5" cy="6.5" r="1.05"/><circle cx="6.5" cy="9.2" r="1.05"/><circle cx="6.5" cy="11.9" r="0.62"/><circle cx="9.2" cy="1.1" r="0.62"/><circle cx="9.2" cy="3.8" r="0.95"/><circle cx="9.2" cy="6.5" r="1.05"/><circle cx="9.2" cy="9.2" r="0.95"/><circle cx="9.2" cy="11.9" r="0.62"/><circle cx="11.9" cy="3.8" r="0.62"/><circle cx="11.9" cy="6.5" r="0.62"/><circle cx="11.9" cy="9.2" r="0.62"/></svg>
<svg style="left:366.500px;top:681.500px" width="13" height="13" viewBox="0 0 13 13"><path d="M3.200 2.700A5.200 5.200 0 1 1 1.300 6.900" stroke="#fff" stroke-width="1.400" fill="none" stroke-linecap="round"/><path d="M.7.600l.3 4.100 3.900-1z" fill="#fff"/></svg>
<svg style="left:391px;top:680.500px" width="13" height="16" viewBox="0 0 13 16"><path d="M.8 3.300h11.400M4.400 3V1.600a.8.800 0 0 1 .8-.8h2.600a.8.800 0 0 1 .8.800V3M2 3.500l.5 10.300a1.400 1.400 0 0 0 1.400 1.400h5.200a1.400 1.400 0 0 0 1.400-1.400L11 3.500M4.700 6v6.500M6.500 6v6.500M8.300 6v6.500" stroke="#fff" stroke-width="1.300" fill="none" stroke-linecap="round" stroke-linejoin="round"/></svg>
<!-- mouse cursor (hand) -->
<svg style="left:877px;top:409px" width="12" height="14" viewBox="0 0 12 14"><path d="M3.400 7.800V1.700a1 1 0 0 1 2 0v4.100l.2-1.100a.9.900 0 0 1 1.800.100v1l.2-.7a.9.900 0 0 1 1.700.300v.9l.2-.4a.8.800 0 0 1 1.500.400v3.500c0 1.300-.4 2-.9 2.700v1H4.300v-1C3.200 11.300 2 9.800 1 8.400a.9.900 0 0 1 1.400-1.100z" fill="#fff" stroke="#111" stroke-width=".9" stroke-linejoin="round"/><path d="M5.600 8.500v3M7.300 8.500v3M9 8.500v3" stroke="#111" stroke-width=".6"/></svg>
<!--OVERLAY-->
</body>
</html>
